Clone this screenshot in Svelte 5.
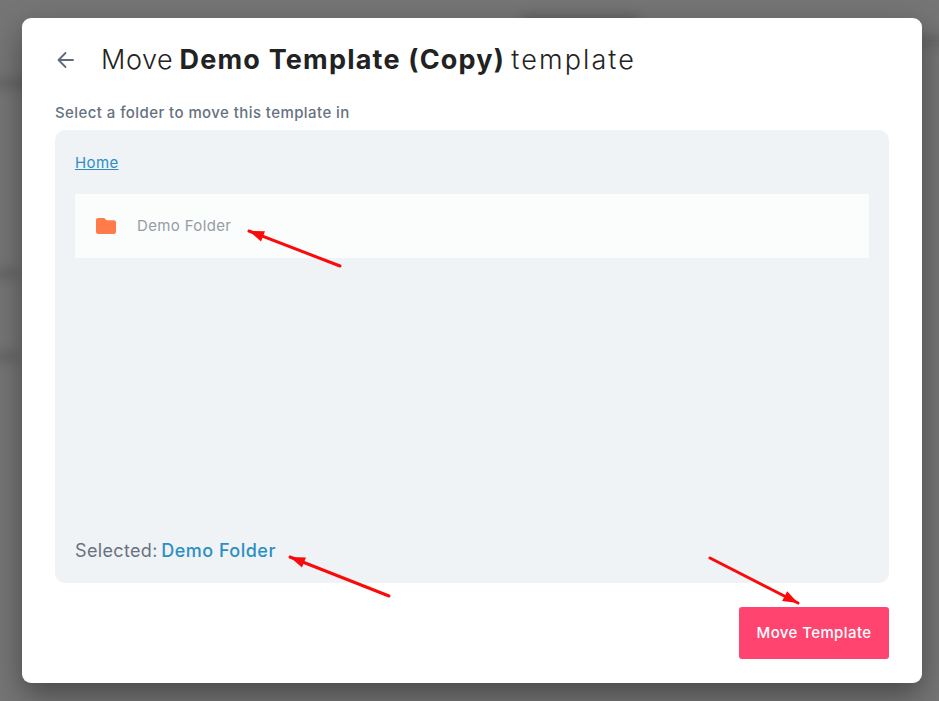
<script lang="ts">
  const title = 'Demo Template (Copy)'
  const folder = 'Demo Folder'

  // red annotation arrows drawn on top of the screenshot
  const arrows = [
    { x1: 340, y1: 266, x2: 249, y2: 231 },
    { x1: 389, y1: 596, x2: 290, y2: 557 },
    { x1: 710, y1: 558, x2: 798, y2: 603 }
  ]

  function head(a: { x1: number; y1: number; x2: number; y2: number }) {
    const ang = Math.atan2(a.y2 - a.y1, a.x2 - a.x1)
    const len = 15
    const w = 5.5
    const bx = a.x2 - Math.cos(ang) * len
    const by = a.y2 - Math.sin(ang) * len
    const nx = -Math.sin(ang) * w
    const ny = Math.cos(ang) * w
    return `${a.x2},${a.y2} ${bx + nx},${by + ny} ${bx - nx},${by - ny}`
  }
</script>

<div class="backdrop">
  <div class="smudge s1"></div>
  <div class="smudge s2"></div>
  <div class="smudge s3"></div>
  <div class="smudge s4"></div>
  <div class="smudge s5"></div>

  <div class="modal">
    <div class="header">
      <svg class="back" width="20" height="20" viewBox="0 0 20 20" fill="none" stroke="#5f6b7a" stroke-width="1.800" stroke-linecap="round" stroke-linejoin="round">
        <path d="M18 10H3.500M10.500 3l-7 7 7 7" />
      </svg>
      <h1>Move <strong>{title}</strong> <span>template</span></h1>
    </div>
    <p class="hint">Select a folder to move this template in</p>
    <div class="panel">
      <a class="crumb" href="#home">Home</a>
      <div class="row">
        <svg width="20" height="16" viewBox="0 0 20 16">
          <path fill="#ff7b4a" d="M2 0h5.600c.5 0 .9.2 1.200.5L10.500 2.200H18c1.100 0 2 .9 2 2V14c0 1.100-.9 2-2 2H2c-1.100 0-2-.9-2-2V2C0 .9.9 0 2 0z" />
        </svg>
        <span>{folder}</span>
      </div>
      <div class="selected">Selected: <b>{folder}</b></div>
    </div>
    <div class="footer">
      <button type="button">Move Template</button>
    </div>
  </div>

  <svg class="arrows" width="939" height="701" viewBox="0 0 939 701">
    {#each arrows as a}
      <line x1={a.x1} y1={a.y1} x2={a.x2} y2={a.y2} stroke="#fa0a0a" stroke-width="3" stroke-linecap="round" />
      <polygon points={head(a)} fill="#fa0a0a" />
    {/each}
  </svg>
</div>

<style>
  :global(body) {
    margin: 0;
    font-family: Inter, 'Open Sans', sans-serif;
  }
  .backdrop {
    position: relative;
    width: 939px;
    height: 701px;
    box-sizing: border-box;
    padding: 18px 17px 18px 22px;
    background: #757575;
    overflow: hidden;
  }
  .smudge {
    position: absolute;
    background: #5c5c5c;
    filter: blur(6px);
  }
  .s1 { left: -10px; top: 80px; width: 40px; height: 7px; }
  .s2 { left: -10px; top: 270px; width: 28px; height: 7px; }
  .s3 { left: -10px; top: 353px; width: 28px; height: 7px; }
  .s4 { left: 522px; top: 16px; width: 116px; height: 10px; }
  .s5 { left: 915px; top: 38px; width: 40px; height: 6px; }

  .modal {
    position: relative;
    box-sizing: border-box;
    width: 900px;
    height: 665px;
    padding: 0 33px;
    display: flex;
    flex-direction: column;
    background: #fff;
    border-radius: 9px;
    box-shadow: 0 12px 30px rgba(0, 0, 0, 0.38);
  }
  .header {
    display: flex;
    align-items: center;
    gap: 26px;
    height: 84px;
    flex: none;
  }
  .back { margin-top: -1px; }
  h1 {
    margin: 0 0 1px;
    font-size: 27px;
    font-weight: 300;
    color: #222;
    letter-spacing: 0.6px;
    word-spacing: -2px;
    white-space: nowrap;
  }
  h1 strong { font-weight: 700; letter-spacing: 1.2px; word-spacing: 0; }
  h1 span { letter-spacing: 2.1px; }
  .hint {
    margin: 0;
    height: 28px;
    line-height: 22px;
    font-size: 15px;
    font-weight: 500;
    color: #667180;
    letter-spacing: 0.42px;
  }
  .panel {
    box-sizing: border-box;
    height: 453px;
    flex: none;
    padding: 0 20px;
    display: flex;
    flex-direction: column;
    background: #eff3f6;
    border-radius: 10px;
  }
  .crumb {
    margin-top: 22px;
    height: 42px;
    font-size: 15px;
    line-height: 22px;
    letter-spacing: 0.4px;
    color: #2b8fc4;
    align-self: flex-start;
  }
  .row {
    height: 64px;
    display: flex;
    align-items: center;
    gap: 21px;
    padding-left: 21px;
    background: #fbfdfc;
    font-size: 15px;
    letter-spacing: 0.36px;
    color: #969ca6;
  }
  .row span { margin-top: -1px; }
  .selected {
    margin-top: auto;
    margin-bottom: 20px;
    font-size: 18px;
    line-height: 24px;
    letter-spacing: 0.35px;
    word-spacing: -2px;
    color: #697280;
  }
  .selected b {
    font-weight: 500;
    word-spacing: 0;
    letter-spacing: 0.5px;
    color: #2b8fc4;
  }
  .footer {
    display: flex;
    justify-content: flex-end;
    margin-top: 24px;
  }
  button {
    width: 150px;
    height: 52px;
    padding: 0 0 2px;
    border: 0;
    border-radius: 3px;
    background: #ff456f;
    color: #fff;
    font-family: inherit;
    font-size: 15px;
    font-weight: 500;
    letter-spacing: 0.4px;
  }
  .arrows {
    position: absolute;
    left: 0;
    top: 0;
    pointer-events: none;
  }
</style>
